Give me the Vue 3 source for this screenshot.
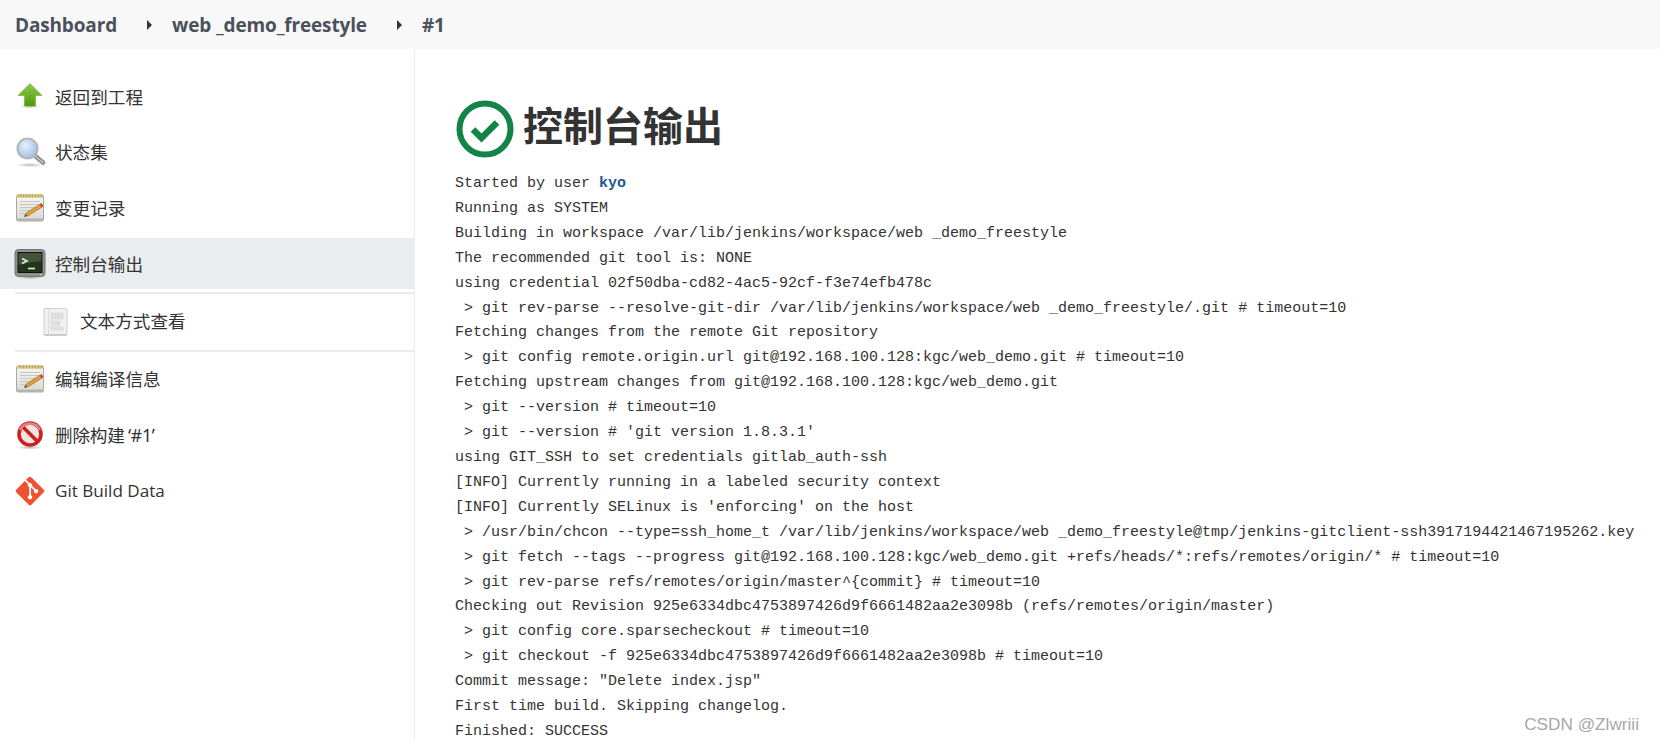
<script setup>
const lines = [
  ['Started by user ', 'kyo'],
  ['Running as SYSTEM'],
  ['Building in workspace /var/lib/jenkins/workspace/web _demo_freestyle'],
  ['The recommended git tool is: NONE'],
  ['using credential 02f50dba-cd82-4ac5-92cf-f3e74efb478c'],
  [' > git rev-parse --resolve-git-dir /var/lib/jenkins/workspace/web _demo_freestyle/.git # timeout=10'],
  ['Fetching changes from the remote Git repository'],
  [' > git config remote.origin.url git@192.168.100.128:kgc/web_demo.git # timeout=10'],
  ['Fetching upstream changes from git@192.168.100.128:kgc/web_demo.git'],
  [' > git --version # timeout=10'],
  [" > git --version # 'git version 1.8.3.1'"],
  ['using GIT_SSH to set credentials gitlab_auth-ssh'],
  ['[INFO] Currently running in a labeled security context'],
  ["[INFO] Currently SELinux is 'enforcing' on the host"],
  [' > /usr/bin/chcon --type=ssh_home_t /var/lib/jenkins/workspace/web _demo_freestyle@tmp/jenkins-gitclient-ssh3917194421467195262.key'],
  [' > git fetch --tags --progress git@192.168.100.128:kgc/web_demo.git +refs/heads/*:refs/remotes/origin/* # timeout=10'],
  [' > git rev-parse refs/remotes/origin/master^{commit} # timeout=10'],
  ['Checking out Revision 925e6334dbc4753897426d9f6661482aa2e3098b (refs/remotes/origin/master)'],
  [' > git config core.sparsecheckout # timeout=10'],
  [' > git checkout -f 925e6334dbc4753897426d9f6661482aa2e3098b # timeout=10'],
  ['Commit message: "Delete index.jsp"'],
  ['First time build. Skipping changelog.'],
  ['Finished: SUCCESS'],
]
</script>

<template>
  <div class="page">
    <svg class="defs" width="0" height="0" aria-hidden="true">
      <defs>
        <linearGradient id="gArrow" x1="0" y1="0" x2="0" y2="1">
          <stop offset="0" stop-color="#8fc94f" />
          <stop offset="1" stop-color="#4e9a06" />
        </linearGradient>
        <radialGradient id="gLens" cx="0.4" cy="0.35" r="0.7">
          <stop offset="0" stop-color="#e6f0fb" />
          <stop offset="1" stop-color="#9dbde2" />
        </radialGradient>
        <linearGradient id="gPaper" x1="0" y1="0" x2="0" y2="1">
          <stop offset="0" stop-color="#f8f8f4" />
          <stop offset="1" stop-color="#d8d8d3" />
        </linearGradient>
        <radialGradient id="gShadow">
          <stop offset="0" stop-color="#000" stop-opacity="0.28" />
          <stop offset="1" stop-color="#000" stop-opacity="0" />
        </radialGradient>
        <symbol id="iNote" viewBox="0 0 32 32">
          <rect x="2.500" y="3" width="27" height="26" rx="1.500" fill="url(#gPaper)" stroke="#a9a9a3" />
          <rect x="3.500" y="2.500" width="25" height="3" fill="#bda34e" />
          <path d="M5 2.500v3M8 2.500v3M11 2.500v3M14 2.500v3M17 2.500v3M20 2.500v3M23 2.500v3M26 2.500v3" stroke="#efe3b0" stroke-width="1" />
          <path d="M6 9.500h20M6 12.500h20M6 15.500h16M6 18.500h10M6 21.500h7" stroke="#c8c8c3" stroke-width="1" />
          <path d="M3 26.500h26V28a1 1 0 0 1-1 1H4a1 1 0 0 1-1-1z" fill="#b4b4af" />
          <path d="M10.500 24.500l1.600-3.400L25.800 12.300l1.800 3.100L14 23.800z" fill="#e2a03a" stroke="#8f6520" stroke-width=".6" />
          <path d="M25.800 12.300l1.800 3.100 1.800-1.200-1.800-3.100z" fill="#d9382e" />
          <path d="M10.500 24.500l1-2.200 1.500 1.600z" fill="#333" />
        </symbol>
      </defs>
    </svg>

    <header class="crumbs">
      <span class="crumb">Dashboard</span>
      <span class="tri"></span>
      <span class="crumb">web _demo_freestyle</span>
      <span class="tri"></span>
      <span class="crumb">#1</span>
    </header>

    <div class="body">
      <nav class="side">
        <a class="item">
          <svg class="ico" viewBox="0 0 32 32">
            <ellipse cx="16" cy="26.500" rx="11" ry="1.800" fill="url(#gShadow)" />
            <path d="M16 3.500L28 15.500H21.500V26H10.500V15.500H4z" fill="url(#gArrow)" stroke="#6fae2e" stroke-width=".6" />
          </svg>
          <span class="first-label">返回到工程</span>
        </a>
        <a class="item">
          <svg class="ico" viewBox="0 0 32 32">
            <ellipse cx="16" cy="29" rx="14" ry="2" fill="url(#gShadow)" />
            <path d="M20.500 19.500L29 26.500" stroke="#8a8a88" stroke-width="4.500" stroke-linecap="round" />
            <path d="M21 20L29 26.500" stroke="#c9c9c7" stroke-width="1.500" stroke-linecap="round" />
            <circle cx="13.500" cy="12.500" r="10" fill="url(#gLens)" stroke="#b5b8bb" stroke-width="2.200" />
          </svg>
          <span>状态集</span>
        </a>
        <a class="item">
          <svg class="ico"><use href="#iNote" /></svg>
          <span>变更记录</span>
        </a>
        <a class="item active">
          <svg class="ico" viewBox="0 0 32 32">
            <ellipse cx="16" cy="29.500" rx="13" ry="1.800" fill="url(#gShadow)" />
            <rect x="1" y="1.500" width="30" height="27" rx="3.500" fill="#8f918c" stroke="#74766f" />
            <rect x="4" y="4.500" width="24" height="20" fill="#26331f" stroke="#111" />
            <path d="M4.500 5h23v8q-12 1-23 4z" fill="#415338" />
            <path d="M8 10.500l5 2.500-5 2.500" fill="none" stroke="#dff0d0" stroke-width="1.600" />
            <path d="M14 20.500h7" stroke="#dff0d0" stroke-width="1.600" />
            <rect x="26" y="26" width="1.500" height="1.500" fill="#b6e07a" />
          </svg>
          <span>控制台输出</span>
        </a>
        <div class="rule"></div>
        <a class="sub">
          <svg class="ico" viewBox="0 0 32 32">
            <rect x="5" y="2.500" width="23" height="27" rx="1.500" fill="#f1f1f0" stroke="#cfcfcd" />
            <path d="M5.500 28h22v1.500h-22z" fill="#c9c9c7" />
            <path d="M9.500 3v26" stroke="#dcdcda" />
            <path d="M11.500 6.500h13v7h-13zM11.500 14.500h10v5h-10zM11.500 20.500h13v4h-13z" fill="#dedede" />
          </svg>
          <span class="sub-label">文本方式查看</span>
        </a>
        <div class="rule last"></div>
        <a class="item">
          <svg class="ico"><use href="#iNote" /></svg>
          <span>编辑编译信息</span>
        </a>
        <a class="item">
          <svg class="ico" viewBox="0 0 32 32">
            <ellipse cx="16" cy="28.500" rx="13" ry="2" fill="url(#gShadow)" />
            <circle cx="16" cy="15" r="11" fill="#f3e3e3" stroke="#cc1f1f" stroke-width="3.600" />
            <path d="M8.500 7.500L23.500 22.500" stroke="#cc1f1f" stroke-width="3.600" />
            <path d="M6 11a11 11 0 0 1 20 0" fill="none" stroke="#fff" stroke-opacity=".45" stroke-width="2.500" />
          </svg>
          <span class="del">删除构建 ‘#1’</span>
        </a>
        <a class="item git">
          <svg class="ico" viewBox="-1.400 -1.400 26.800 26.800">
            <path fill="#f05133" d="M23.546 10.930L13.067.452c-.604-.603-1.582-.603-2.188 0L8.708 2.627l2.760 2.760c.645-.215 1.379-.07 1.889.441.516.515.658 1.258.438 1.900l2.658 2.660c.645-.223 1.387-.078 1.900.435.721.720.721 1.884 0 2.604-.719.719-1.881.719-2.600 0-.539-.541-.674-1.337-.404-1.996L12.860 8.955v6.525c.176.086.342.203.488.348.713.721.713 1.883 0 2.600-.719.721-1.889.721-2.609 0-.719-.719-.719-1.879 0-2.598.182-.18.387-.316.605-.406V8.835c-.217-.091-.424-.222-.6-.401-.545-.545-.676-1.342-.396-2.009L7.636 3.700.45 10.881c-.6.605-.6 1.584 0 2.189l10.480 10.477c.604.604 1.582.604 2.186 0l10.430-10.430c.605-.603.605-1.582 0-2.187" />
          </svg>
          <span>Git Build Data</span>
        </a>
      </nav>

      <main class="main">
        <h1 class="title">
          <svg class="check" viewBox="0 0 58 58">
            <circle cx="29" cy="29" r="25.500" fill="none" stroke="#138347" stroke-width="6" />
            <path d="M17 29.500l8.500 8.500L41 22.500" fill="none" stroke="#138347" stroke-width="6.500" />
          </svg>
          <span class="title-text">控制台输出</span>
        </h1>
        <pre class="console"><template v-for="(l, i) in lines" :key="i">{{ l[0] }}<b v-if="l[1]" class="user">{{ l[1] }}</b>{{ '\n' }}</template></pre>
      </main>
    </div>
    <div class="mark">CSDN @Zlwriii</div>
  </div>
</template>

<style scoped>
.page {
  position: relative;
  height: 741px;
  overflow: hidden;
  background: #fff;
  color: #333;
  font-family: "Noto Sans", "Noto Sans CJK SC", sans-serif;
}
.defs { position: absolute; }
.crumbs {
  height: 49px;
  display: flex;
  align-items: center;
  padding-left: 15px;
  background: #f8f8f8;
  color: #4b515b;
  font-family: "Open Sans", sans-serif;
  font-size: 19px;
  font-weight: 700;
  letter-spacing: -0.15px;
}
.tri {
  width: 0;
  height: 0;
  margin: 0 20px 0 30px;
  border-left: 5px solid #333;
  border-top: 5px solid transparent;
  border-bottom: 5px solid transparent;
}
.body { display: flex; }
.side {
  width: 414px;
  height: 692px;
  padding-top: 21px;
  border-right: 1px solid #e9edf0;
  font-family: "Noto Sans", "Noto Sans CJK SC", sans-serif;
  font-size: 17.600px;
}
.item {
  display: flex;
  align-items: center;
  gap: 9px;
  height: 51px;
  box-sizing: border-box;
  padding-left: 14px;
  margin-bottom: 5px;
}
.item.active {
  background: #e9edf0;
  margin-bottom: 3px;
}
.first-label { margin-top: 2px; }
.del { word-spacing: -1px; letter-spacing: -0.2px; }
.git { font-family: "Open Sans", sans-serif; font-size: 17.100px; font-weight: 500; }
.sub {
  display: flex;
  align-items: center;
  gap: 9px;
  height: 56px;
  padding-left: 39px;
}
.sub-label { margin-bottom: 3px; }
.ico { width: 32px; height: 32px; flex: none; }
.rule { height: 2px; margin-left: 15px; background: #e9edf0; }
.rule.last { margin-bottom: 1px; }
.main { padding-left: 41px; flex: 1; min-width: 0; }
.title {
  display: flex;
  align-items: center;
  gap: 9px;
  height: 58px;
  margin: 51px 0 0;
  font-family: "Noto Sans CJK SC", sans-serif;
  font-size: 40px;
  font-weight: 700;
  line-height: 1;
  color: #333;
}
.title-text { margin-bottom: 10px; }
.check { width: 58px; height: 58px; flex: none; }
.console {
  margin: 14px 0 0 -1px;
  font-family: "Liberation Mono", monospace;
  font-size: 15px;
  line-height: 24.900px;
  color: #333;
  white-space: pre;
}
.user { color: #22558f; }
.mark {
  position: absolute;
  right: 21px;
  bottom: 6px;
  font-family: "Liberation Sans", sans-serif;
  font-size: 17.200px;
  color: #a8a8a8;
}
</style>
